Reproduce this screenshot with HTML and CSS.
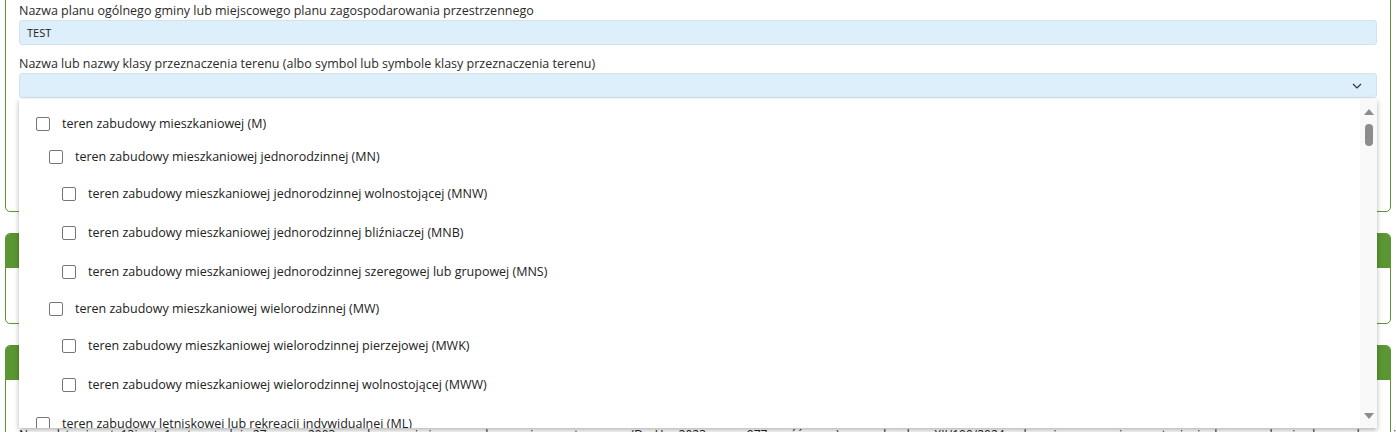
FILE: index.html
```html
<!DOCTYPE html>
<html lang="pl">
<head>
<meta charset="utf-8">
<title>Formularz</title>
<link rel="stylesheet" href="styles.css">
</head>
<body>
<div class="page">
  <section class="card card-top">
    <div class="field">
      <label class="lbl">Nazwa planu ogólnego gminy lub miejscowego planu zagospodarowania przestrzennego</label>
      <div class="input">TEST</div>
    </div>
    <div class="field field-select">
      <label class="lbl">Nazwa lub nazwy klasy przeznaczenia terenu (albo symbol lub symbole klasy przeznaczenia terenu)</label>
      <div class="select">
        <svg class="chev" width="10" height="6" viewBox="0 0 10 6"><polyline points="1,1 5,5 9,1" fill="none" stroke="#333" stroke-width="1.2"/></svg>
      </div>
      <div class="dropdown">
        <div class="list">
          <div class="row l1"><span class="cb"></span><span class="txt">teren zabudowy mieszkaniowej (M)</span></div>
          <div class="row l2"><span class="cb"></span><span class="txt">teren zabudowy mieszkaniowej jednorodzinnej (MN)</span></div>
          <div class="row l3"><span class="cb"></span><span class="txt">teren zabudowy mieszkaniowej jednorodzinnej wolnostojącej (MNW)</span></div>
          <div class="row l3"><span class="cb"></span><span class="txt">teren zabudowy mieszkaniowej jednorodzinnej bliźniaczej (MNB)</span></div>
          <div class="row l3"><span class="cb"></span><span class="txt">teren zabudowy mieszkaniowej jednorodzinnej szeregowej lub grupowej (MNS)</span></div>
          <div class="row l2"><span class="cb"></span><span class="txt">teren zabudowy mieszkaniowej wielorodzinnej (MW)</span></div>
          <div class="row l3"><span class="cb"></span><span class="txt">teren zabudowy mieszkaniowej wielorodzinnej pierzejowej (MWK)</span></div>
          <div class="row l3"><span class="cb"></span><span class="txt">teren zabudowy mieszkaniowej wielorodzinnej wolnostojącej (MWW)</span></div>
          <div class="row l1 after-group"><span class="cb"></span><span class="txt">teren zabudowy letniskowej lub rekreacji indywidualnej (ML)</span></div>
        </div>
        <div class="sb">
          <span class="sb-up"></span>
          <span class="sb-thumb"></span>
          <span class="sb-fill"></span>
          <span class="sb-down"></span>
        </div>
      </div>
    </div>
  </section>
  <section class="card">
    <header class="card-head"></header>
    <div class="card-body"></div>
  </section>
  <section class="card">
    <header class="card-head"></header>
    <div class="card-body body-text">
      <p>Na podstawie art. 13i ust. 1 ustawy z dnia 27 marca 2003 r. o planowaniu i zagospodarowaniu przestrzennym (Dz. U. z 2023 r. poz. 977, z późn. zm.) oraz uchwały nr XII/100/2024 rady gminy w sprawie przystąpienia do sporządzania planu, ogłasza się co następuje, 1884</p>
    </div>
  </section>
</div>
</body>
</html>
```
FILE: styles.css
```css
html, body {
  margin: 0;
  padding: 0;
  background: #ffffff;
  height: 432px;
  overflow: hidden;
}
body {
  font-family: "Open Sans", "Noto Sans", sans-serif;
  color: #222222;
}
.page {
  padding: 0 5px;
  display: flex;
  flex-direction: column;
  gap: 21px;
}
.card {
  border: 1px solid #5b9633;
  border-radius: 5px;
  background: #ffffff;
}
.card-top {
  margin-top: -20px;
  padding: 22px 13px 113px 13px;
  position: relative;
}
.field {
  display: flex;
  flex-direction: column;
  gap: 1px;
}
.field + .field {
  margin-top: 11px;
}
.field-select {
  position: relative;
}
.lbl {
  font-size: 12.5px;
  line-height: 16px;
  color: #2b2b2b;
}
.input, .select {
  height: 25px;
  box-sizing: border-box;
  background: #ddeffa;
  border: 1px solid #d3e3ee;
  border-radius: 3px;
  font-size: 11px;
  display: flex;
  align-items: center;
  padding: 0 7px;
}
.select {
  justify-content: flex-end;
  padding-right: 14px;
}
.chev {
  display: block;
}
.dropdown {
  position: absolute;
  top: 100%;
  left: 0;
  right: 0;
  margin-top: 1px;
  height: 329px;
  background: #ffffff;
  box-shadow: 0 2px 5px rgba(0,0,0,0.3);
  display: flex;
  z-index: 5;
}
.list {
  flex: 1;
  overflow: hidden;
  padding: 9px 0 0 17px;
}
.row {
  display: flex;
  align-items: center;
  gap: 12px;
  font-size: 12.5px;
  color: #222222;
  white-space: nowrap;
}
.row.l1 { height: 31px; }
.row.l2 { height: 35px; padding-left: 13px; }
.row.l3 { height: 39px; padding-left: 26px; }
.row.after-group { margin-top: 4px; }
.cb {
  width: 14px;
  height: 14px;
  box-sizing: border-box;
  border: 1px solid #767676;
  border-radius: 2px;
  background: #ffffff;
  flex: none;
}
.sb {
  width: 17px;
  background: #f9f9f9;
  display: flex;
  flex-direction: column;
  align-items: center;
  padding: 10px 0 9px;
}
.sb-up, .sb-down {
  width: 0;
  height: 0;
  border-left: 5px solid transparent;
  border-right: 5px solid transparent;
}
.sb-up {
  border-bottom: 6px solid #8c8c8c;
}
.sb-down {
  border-top: 6px solid #8c8c8c;
}
.sb-thumb {
  margin-top: 9px;
  width: 8px;
  height: 22px;
  border-radius: 4px;
  background: #8c8c8c;
}
.sb-fill {
  flex: 1;
}
.card-head {
  height: 34px;
  background: #5b9633;
  border-radius: 4px 4px 0 0;
}
.card-body {
  height: 55px;
}
.body-text {
  height: auto;
  padding: 47px 13px 20px;
}
.body-text p {
  margin: 0;
  font-size: 12px;
  line-height: 16px;
  white-space: nowrap;
  color: #222222;
}
```
